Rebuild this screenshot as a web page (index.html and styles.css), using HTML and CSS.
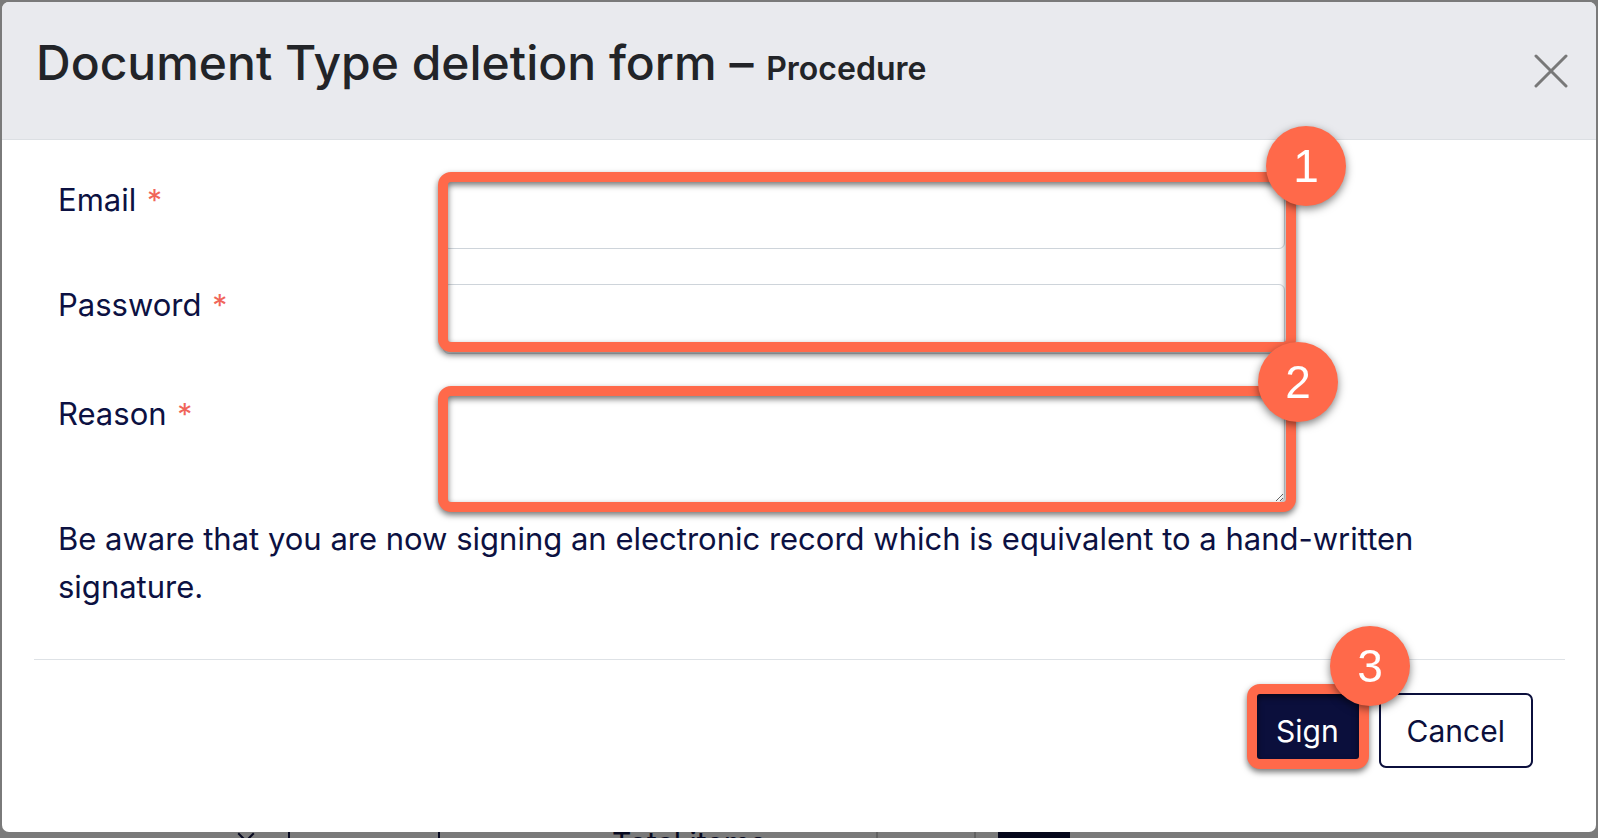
FILE: index.html
```html
<!DOCTYPE html>
<html lang="en">
<head>
    <meta charset="UTF-8">
    <meta name="viewport" content="width=device-width, initial-scale=1.0">
    <title>Document Type deletion form</title>
    <link rel="stylesheet" href="styles.css">
</head>
<body>

    <div class="page">
        <div class="page-toolbar">
            <span class="chevron"></span>
            <button class="apply-btn">Apply</button>
            <span class="total-items">Total items</span>
            <span class="toolbar-sep"></span>
            <span class="toolbar-sep"></span>
            <span class="toolbar-dark"></span>
        </div>
    </div>

    <div class="backdrop">
        <div class="modal">
            <div class="modal-header">
                <h1 class="modal-title">Document Type deletion form – <small>Procedure</small></h1>
                <button class="close-btn" aria-label="Close">
                    <svg width="34" height="34" viewBox="0 0 34 34">
                        <path d="M2 2 L32 32 M32 2 L2 32" stroke="#787878" stroke-width="3" stroke-linecap="round" fill="none"/>
                    </svg>
                </button>
            </div>

            <div class="modal-body">
                <form class="sign-form">
                    <div class="form-row">
                        <label for="email">Email <span class="req">*</span></label>
                        <input type="email" id="email">
                    </div>
                    <div class="form-row form-row-last">
                        <label for="password">Password <span class="req">*</span></label>
                        <input type="password" id="password">
                    </div>
                    <div class="form-row form-row-reason">
                        <label for="reason">Reason <span class="req">*</span></label>
                        <textarea id="reason"></textarea>
                    </div>
                </form>
                <p class="notice">Be aware that you are now signing an electronic record which is equivalent to a hand-written signature.</p>
            </div>

            <div class="modal-footer">
                <button class="btn btn-sign">Sign</button>
                <button class="btn btn-cancel">Cancel</button>
            </div>

            <!-- tutorial callouts drawn over the form -->
            <div class="callout callout-1"></div>
            <div class="callout callout-2"></div>
            <div class="callout callout-3"></div>
            <div class="step step-1">1</div>
            <div class="step step-2">2</div>
            <div class="step step-3">3</div>
        </div>
    </div>

</body>
</html>
```

FILE: styles.css
```css
body {
    margin: 0;
    padding: 0;
    font-family: Inter, "Noto Sans", sans-serif;
    background-color: #fff;
    overflow: hidden;
}

.page {
    padding-top: 832px;
}

.page-toolbar {
    display: flex;
    align-items: flex-start;
    height: 40px;
    color: #0c1142;
}

.chevron {
    width: 10px;
    height: 10px;
    margin-left: 240px;
    margin-top: -4px;
    border-right: 2px solid #0c1142;
    border-bottom: 2px solid #0c1142;
    transform: rotate(45deg);
}

.apply-btn {
    margin-left: 36px;
    width: 152px;
    height: 40px;
    font-family: Inter, sans-serif;
    font-size: 30px;
    line-height: 30px;
    color: #0c1142;
    background: #fff;
    border: 2px solid #0c1142;
    border-top: none;
    border-radius: 0 0 6px 6px;
}

.total-items {
    margin-left: 172px;
    font-size: 30px;
    line-height: 22px;
}

.toolbar-sep {
    width: 2px;
    height: 40px;
    background: #ccc;
    margin-left: 110px;
}

.toolbar-sep + .toolbar-sep {
    margin-left: 96px;
}

.toolbar-dark {
    width: 72px;
    height: 40px;
    margin-left: 22px;
    background-color: #0b0f3c;
}

.backdrop {
    position: fixed;
    top: 0;
    left: 0;
    right: 0;
    bottom: 0;
    padding: 2px;
    background-color: rgba(0, 0, 0, 0.52);
}

.modal {
    position: relative;
    background-color: #fff;
    border-radius: 7px;
}

.modal-header {
    display: flex;
    justify-content: space-between;
    align-items: flex-start;
    height: 138px;
    box-sizing: border-box;
    padding: 31px 28px 0 34px;
    background-color: #e9eaee;
    border-bottom: 1.5px solid #dcdfe3;
    border-radius: 7px 7px 0 0;
}

.modal-title {
    margin: 0;
    font-size: 48px;
    line-height: 60px;
    font-weight: 500;
    color: #222428;
}

.modal-title small {
    font-size: 32px;
    font-weight: 600;
}

.close-btn {
    align-self: center;
    margin-top: -30px;
    padding: 0;
    border: none;
    background: none;
    line-height: 0;
    cursor: pointer;
}

.modal-body {
    padding: 39px 56px 48px 56px;
}

.form-row {
    display: flex;
    align-items: flex-start;
    margin-bottom: 35px;
}

.form-row-last {
    margin-bottom: 39px;
}

.form-row-reason {
    margin-bottom: 12px;
}

.form-row label {
    width: 385px;
    flex: none;
    padding-top: 3px;
    font-size: 31px;
    line-height: 36px;
    color: #0c1142;
}

.req {
    color: #f0655a;
    font-size: 30px;
    margin-left: 2px;
}

.form-row input,
.form-row textarea {
    width: 842px;
    height: 70px;
    box-sizing: border-box;
    border: 1.5px solid #ced4da;
    border-radius: 6px;
    background: #fff;
    font-family: Inter, sans-serif;
    font-size: 28px;
    padding: 8px 16px;
}

.form-row textarea {
    height: 110px;
    resize: vertical;
}

.notice {
    margin: 0;
    font-size: 31px;
    line-height: 48px;
    color: #0c1142;
}

.modal-footer {
    display: flex;
    justify-content: flex-end;
    gap: 15px;
    margin: 0 31px 0 32px;
    padding: 33px 32px 64px 0;
    border-top: 1.5px solid #dee2e6;
}

.btn {
    height: 75px;
    padding: 0 26px;
    font-family: Inter, sans-serif;
    font-size: 30px;
    border-radius: 7px;
    cursor: pointer;
}

.btn-sign {
    padding: 0 23px;
    color: #fff;
    background-color: #0b0f3c;
    border: 2px solid #0b0f3c;
}

.btn-cancel {
    color: #0b0f3c;
    background-color: #fff;
    border: 2px solid #0b0f3c;
}

.callout {
    position: absolute;
    box-sizing: border-box;
    border: 10px solid #ff694a;
    border-radius: 13px;
    filter: drop-shadow(0 3px 3px rgba(0, 0, 0, 0.55));
}

.callout-1 {
    left: 436px;
    top: 170px;
    width: 858px;
    height: 180px;
}

.callout-2 {
    left: 436px;
    top: 384px;
    width: 858px;
    height: 126px;
}

.callout-3 {
    left: 1245px;
    top: 682px;
    width: 122px;
    height: 85px;
}

.step {
    position: absolute;
    width: 80px;
    height: 80px;
    border-radius: 50%;
    background-color: #ff694a;
    color: #fff;
    font-family: "Liberation Sans", Arial, sans-serif;
    font-size: 46px;
    line-height: 80px;
    text-align: center;
    filter: drop-shadow(0 3px 4px rgba(0, 0, 0, 0.5));
}

.step-1 {
    left: 1264px;
    top: 124px;
}

.step-2 {
    left: 1256px;
    top: 340px;
}

.step-3 {
    left: 1328px;
    top: 624px;
}
```
